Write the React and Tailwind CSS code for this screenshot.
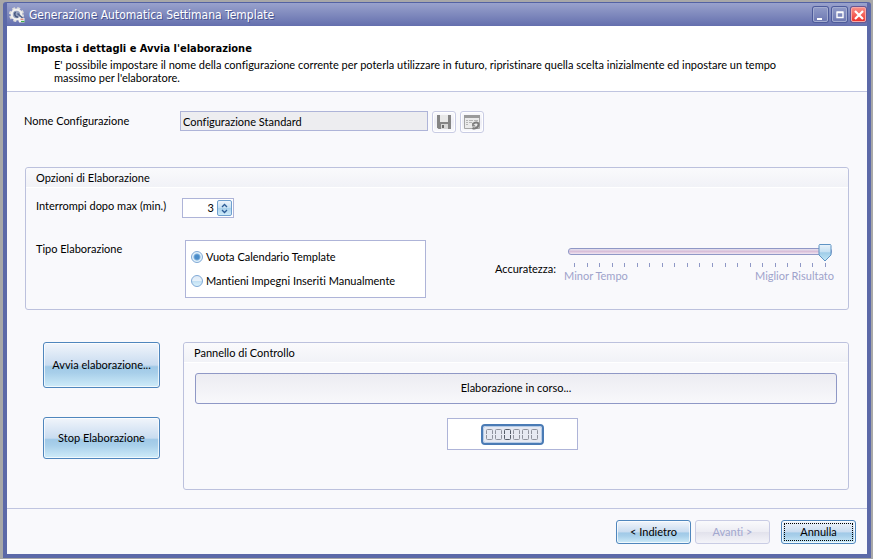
import { useState } from "react";

const TICKS = Array.from({ length: 21 }, (_, i) => i);

const glossy =
  "rounded-[3px] border border-[#4f86bd] bg-[linear-gradient(180deg,#f1f5fb_0%,#c9dcf0_50%,#a0c9e7_54%,#a8cfea_68%,#cfecf9_100%)] shadow-[inset_0_0_0_1px_rgba(255,255,255,0.7)]";

function GearIcon() {
  return (
    <svg viewBox="0 0 16 16" className="size-4" aria-hidden="true">
      <circle cx="7.5" cy="7.5" r="6" fill="none" stroke="#dedddb" strokeWidth="3" strokeDasharray="2.700 2.012" />
      <circle cx="7.5" cy="7.5" r="4.800" fill="#98a3bf" stroke="#f1f0ee" strokeWidth="2.200" />
      <path d="M6.500 5a3 3 0 0 0 2.500 5" fill="none" stroke="#46577c" strokeWidth="1.500" />
      <path d="M8.500 6.500l5 4.500" stroke="#51648d" strokeWidth="1.600" />
      <path d="M10 11h5.500v4.500H10z" fill="#f2f2f0" />
      <path d="M12 14.500h3.500" stroke="#3faa48" strokeWidth="1.200" />
      <path d="M11.500 12.200h3" stroke="#d9674e" strokeWidth="1" />
    </svg>
  );
}

function WindowButton({ label, danger, children }) {
  return (
    <button
      type="button"
      aria-label={label}
      className={
        danger
          ? "flex size-[15px] items-center justify-center rounded-[2px] border border-[#f7a9a6] bg-linear-to-b from-[#f98b85] to-[#ee2f2b] shadow-[0_0_0_1px_#6a5590]"
          : "flex size-[15px] items-center justify-center rounded-[2px] border border-[#a3accf] bg-linear-to-b from-[#8f99c6] to-[#6f7ab3] shadow-[0_0_0_1px_#4d5b9b]"
      }
    >
      {children}
    </button>
  );
}

function TitleBar() {
  return (
    <header className="flex h-6 items-center gap-1 border-t border-[#5362a3] bg-linear-to-b from-[#99a2cc] via-[#7f89bd] to-[#646fae] pr-px pl-0.5">
      <GearIcon />
      <h1 className="flex-1 font-['DejaVu_Sans_Condensed','Noto_Sans',sans-serif] text-[12px] leading-4 text-white [text-shadow:1px_1px_0_#4a5590]">
        Generazione Automatica Settimana Template
      </h1>
      <div className="flex gap-1">
        <WindowButton label="Riduci a icona">
          <svg viewBox="0 0 14 14" className="size-3.5 shrink-0" aria-hidden="true">
            <path d="M3 10h5v2H3z" fill="#fff" />
          </svg>
        </WindowButton>
        <WindowButton label="Ingrandisci">
          <svg viewBox="0 0 14 14" className="size-3.5 shrink-0" aria-hidden="true">
            <path d="M4 4.500h6v5H4zM3.500 4h7" fill="none" stroke="#fff" strokeWidth="1.400" />
          </svg>
        </WindowButton>
        <WindowButton label="Chiudi" danger>
          <svg viewBox="0 0 14 14" className="size-3.5 shrink-0" aria-hidden="true">
            <path d="M3 3l8 8M11 3l-8 8" stroke="#fff" strokeWidth="2.2" />
          </svg>
        </WindowButton>
      </div>
    </header>
  );
}

function IconButton({ label, children }) {
  return (
    <button
      type="button"
      aria-label={label}
      className="flex h-[22px] w-6 items-center justify-center rounded-[3px] border border-[#c9cce4] bg-linear-to-b from-[#fbfbfd] via-[#eeeef5] to-[#fafafd] shadow-[inset_0_0_0_1px_#ffffff]"
    >
      {children}
    </button>
  );
}

function Group({ title, className, children }) {
  return (
    <section className={`rounded-[3px] border border-[#bcc1dd] ${className}`}>
      <h3 className="h-5 rounded-t-[3px] border-b border-white bg-linear-to-b from-[#fafafc] to-[#f1f2f7] pl-2.5 leading-5">
        {title}
      </h3>
      {children}
    </section>
  );
}

function Accuracy() {
  const [value, setValue] = useState(20);
  return (
    <div className="flex w-[339px] shrink-0">
      <label htmlFor="accuracy" className="w-[69px] pt-[17px] leading-4">
        Accuratezza:
      </label>
      <div className="flex-1">
        <div className="relative mr-0.5 ml-1 h-[18px]">
          <input
            id="accuracy"
            type="range"
            min="0"
            max="20"
            value={value}
            onChange={(e) => setValue(Number(e.target.value))}
            className="absolute inset-x-0 top-1 h-[7px] w-full appearance-none rounded-[3px] border border-[#8f98c6] bg-linear-to-b from-[#e4e2f0] via-[#d9bfd9] to-[#f1e6f2] [&::-webkit-slider-thumb]:h-4 [&::-webkit-slider-thumb]:w-3.5 [&::-webkit-slider-thumb]:appearance-none"
          />
          <div className="pointer-events-none absolute inset-y-0 right-3.5 left-0">
            <svg
              viewBox="0 0 14 18"
              className="absolute top-0 h-[18px] w-3.5"
              style={{ left: `${value * 5}%` }}
              aria-hidden="true"
            >
              <defs>
                <linearGradient id="thumb" x1="0" y1="0" x2="0" y2="1">
                  <stop offset="0" stopColor="#e9f3fb" />
                  <stop offset="0.45" stopColor="#c4e0f2" />
                  <stop offset="0.5" stopColor="#9fcde8" />
                  <stop offset="1" stopColor="#c4e8f6" />
                </linearGradient>
              </defs>
              <path d="M1.5.5h11l.5 1v9.500l-6 6-6-6V1.500z" fill="url(#thumb)" stroke="#5f94c4" />
            </svg>
          </div>
        </div>
        <div className="mt-px mr-2 ml-2.5 flex justify-between">
          {TICKS.map((t) => (
            <span key={t} className="h-1 w-px bg-[#8f98c6]" />
          ))}
        </div>
        <div className="mt-px flex justify-between leading-4 text-[#9ea3cb]">
          <span>Minor Tempo</span>
          <span>Miglior Risultato</span>
        </div>
      </div>
    </div>
  );
}

function Radio({ id, label, checked, onChange }) {
  return (
    <div className="flex items-center gap-[3px]">
      <input
        id={id}
        type="radio"
        name="tipo"
        checked={checked}
        onChange={onChange}
        className="size-3 shrink-0 appearance-none rounded-full border border-[#7fa9d6] bg-[linear-gradient(180deg,#dfeaf6_0%,#e6f1fa_45%,#c3e0f3_55%,#d9f1fb_100%)] checked:bg-[radial-gradient(circle,#4a8cc9_0_2px,#7db0dc_3px,#e2f1fb_4px)]"
      />
      <label htmlFor={id} className="leading-4">
        {label}
      </label>
    </div>
  );
}

function Digit({ x, dark }) {
  return (
    <g transform={`translate(${x} 4)`} stroke={dark ? "#555c68" : "#8f929d"} fill="none">
      <rect x="1.500" y="1.500" width="6" height="10" rx="1" />
      <path d="M0 6.500h8" stroke="#e6e9f2" />
    </g>
  );
}

function Counter() {
  return (
    <div className="mr-[7px] flex h-8 w-[131px] items-center justify-center border border-[#aeb4d8] bg-white">
      <svg viewBox="0 0 63 21" className="h-[21px] w-[63px]" role="img" aria-label="Contatore a sei cifre">
        <rect x="1" y="1" width="61" height="19" rx="3" fill="#e6e9f2" stroke="#4a7bb5" strokeWidth="2" />
        <rect x="2.500" y="2.500" width="58" height="16" rx="2" fill="none" stroke="#b5cbe6" />
        {[0, 1, 2, 3, 4, 5].map((d) => (
          <Digit key={d} x={4 + d * 9} dark={d === 2} />
        ))}
      </svg>
    </div>
  );
}

export default function App() {
  const [tipo, setTipo] = useState("vuota");
  const [minutes, setMinutes] = useState(3);

  return (
    <div className="flex min-h-screen flex-col bg-[#a8a8a8] pt-0.5 pr-0.5 pb-px pl-[3px] font-[Lato,'Noto_Sans',sans-serif] text-[11px] text-black [font-variant-ligatures:none]">
      <div className="flex flex-1 flex-col rounded-t-[3px] border-x-4 border-b-4 border-[#5c69a8] shadow-[inset_0_0_0_1px_#4a5798]">
        <TitleBar />
        <div className="border-b border-[#c0c5e0] bg-white pt-[15px] pr-20 pb-[7px] pl-5">
          <h2 className="font-['DejaVu_Sans_Condensed','Noto_Sans',sans-serif] leading-4 font-bold">
            Imposta i dettagli e Avvia l'elaborazione
          </h2>
          <p className="pt-px pl-[27px] leading-[13px]">
            E' possibile impostare il nome della configurazione corrente per poterla utilizzare in futuro, ripristinare
            quella scelta inizialmente ed inpostare un tempo massimo per l'elaboratore.
          </p>
        </div>

        <main className="flex-1 bg-[#f9f9fc] pt-[19px] pr-[18px] pb-[18px] pl-[17px]">
          <div className="flex h-[22px] gap-1">
            <label htmlFor="nome" className="w-[152px] leading-5">
              Nome Configurazione
            </label>
            <input
              id="nome"
              readOnly
              defaultValue="Configurazione Standard"
              className="h-5 w-[248px] border border-[#aeb4d8] bg-[#ededf0] pl-0.5"
            />
            <IconButton label="Salva configurazione">
              <svg viewBox="0 0 16 16" className="size-4" aria-hidden="true">
                <path d="M1 1h14v14H2.500L1 13.500z" fill="#858585" />
                <path d="M4 1h8v7H4z" fill="#e8e8e8" />
                <path d="M5 10h7v5H5z" fill="#d6d6d6" />
                <path d="M6 11h2v3H6z" fill="#6b6b6b" />
              </svg>
            </IconButton>
            <IconButton label="Ripristina configurazione">
              <svg viewBox="0 0 16 16" className="size-4" aria-hidden="true">
                <path d="M.5 1.500h15v13H.5z" fill="#ebebeb" stroke="#a5a5a5" />
                <path d="M0 1h16v3H0z" fill="#9b9b9b" />
                <path d="M2 6.500h2M2 8.500h2M2 10.500h2M5 6.500h4M5 8.500h3M10 6.500h4" stroke="#b5b5b5" />
                <path d="M9 10c2-2.500 6-2 5.500 1s-4 4-6 3" fill="none" stroke="#7b7b7b" strokeWidth="2" />
                <path d="M8 8.500v4h4z" fill="#8a8a8a" />
              </svg>
            </IconButton>
          </div>

          <Group title="Opzioni di Elaborazione" className="mt-[34px] mb-8 ml-px pb-[11px]">
            <div className="mt-2.5 flex h-5 pl-2.5">
              <label htmlFor="minuti" className="w-[146px] leading-4">
                Interrompi dopo max (min.)
              </label>
              <div className="flex h-5 w-[52px] items-center border border-[#aeb4d8] bg-white pr-px">
                <input
                  id="minuti"
                  inputMode="numeric"
                  value={minutes}
                  onChange={(e) => setMinutes(Number(e.target.value) || 0)}
                  className="w-0 flex-1 pr-[3px] text-right outline-none"
                />
                <button
                  type="button"
                  aria-label="Aumenta minuti"
                  onClick={() => setMinutes(minutes + 1)}
                  className="flex h-4 w-[15px] items-center justify-center rounded-[2px] border border-[#6fa0cf] bg-[linear-gradient(180deg,#eef4fb,#c4dff2_50%,#a9d1ec_51%,#d0ecf9)]"
                >
                  <svg viewBox="0 0 9 11" className="h-[11px] w-[9px]" aria-hidden="true">
                    <path d="M2 4l2.500-2.500L7 4M2 7l2.500 2.500L7 7" fill="none" stroke="#2c5c96" strokeWidth="1.300" />
                  </svg>
                </button>
              </div>
            </div>
            <div className="mt-[22px] flex justify-between pr-3.5 pl-2.5">
              <div className="flex">
                <span className="w-[149px] leading-[18px]">Tipo Elaborazione</span>
                <div
                  role="radiogroup"
                  aria-label="Tipo Elaborazione"
                  className="flex h-[58px] w-[241px] flex-col justify-center gap-2 border border-[#aeb4d8] bg-white pl-[5px]"
                >
                  <Radio
                    id="vuota"
                    label="Vuota Calendario Template"
                    checked={tipo === "vuota"}
                    onChange={() => setTipo("vuota")}
                  />
                  <Radio
                    id="mantieni"
                    label="Mantieni Impegni Inseriti Manualmente"
                    checked={tipo === "mantieni"}
                    onChange={() => setTipo("mantieni")}
                  />
                </div>
              </div>
              <div className="pt-1">
                <Accuracy />
              </div>
            </div>
          </Group>

          <div className="flex gap-[23px] pl-[19px]">
            <div className="flex w-[117px] shrink-0 flex-col gap-[29px]">
              <button type="button" className={`h-[46px] ${glossy}`}>
                Avvia elaborazione...
              </button>
              <button type="button" className={`h-[42px] ${glossy}`}>
                Stop Elaborazione
              </button>
            </div>
            <Group title="Pannello di Controllo" className="flex-1 pb-[39px]">
              <div className="flex flex-col items-center gap-3.5 px-[11px] pt-2.5">
                <button
                  type="button"
                  className="h-[31px] w-full rounded-[3px] border border-[#8f98c6] bg-linear-to-b from-[#ececf2] to-[#f8f8fb]"
                >
                  Elaborazione in corso...
                </button>
                <Counter />
              </div>
            </Group>
          </div>
        </main>

        <footer className="flex justify-end gap-1 border-t border-[#c0c5e0] bg-[#f9f9fc] pt-[11px] pr-[11px] pb-2.5">
          <button type="button" className={`h-6 w-[75px] ${glossy}`}>
            &lt; Indietro
          </button>
          <button
            type="button"
            disabled
            className="h-6 w-[75px] rounded-[3px] border border-[#c9cce4] bg-[linear-gradient(180deg,#fafafc,#ececf3_50%,#e2e2ec_51%,#f4f4f9)] text-[#a2a7cf]"
          >
            Avanti &gt;
          </button>
          <button type="button" className={`ml-[7px] flex h-6 w-[75px] p-0.5 ${glossy}`}>
            <span className="flex-1 border border-dotted border-black leading-4">Annulla</span>
          </button>
        </footer>
      </div>
    </div>
  );
}
